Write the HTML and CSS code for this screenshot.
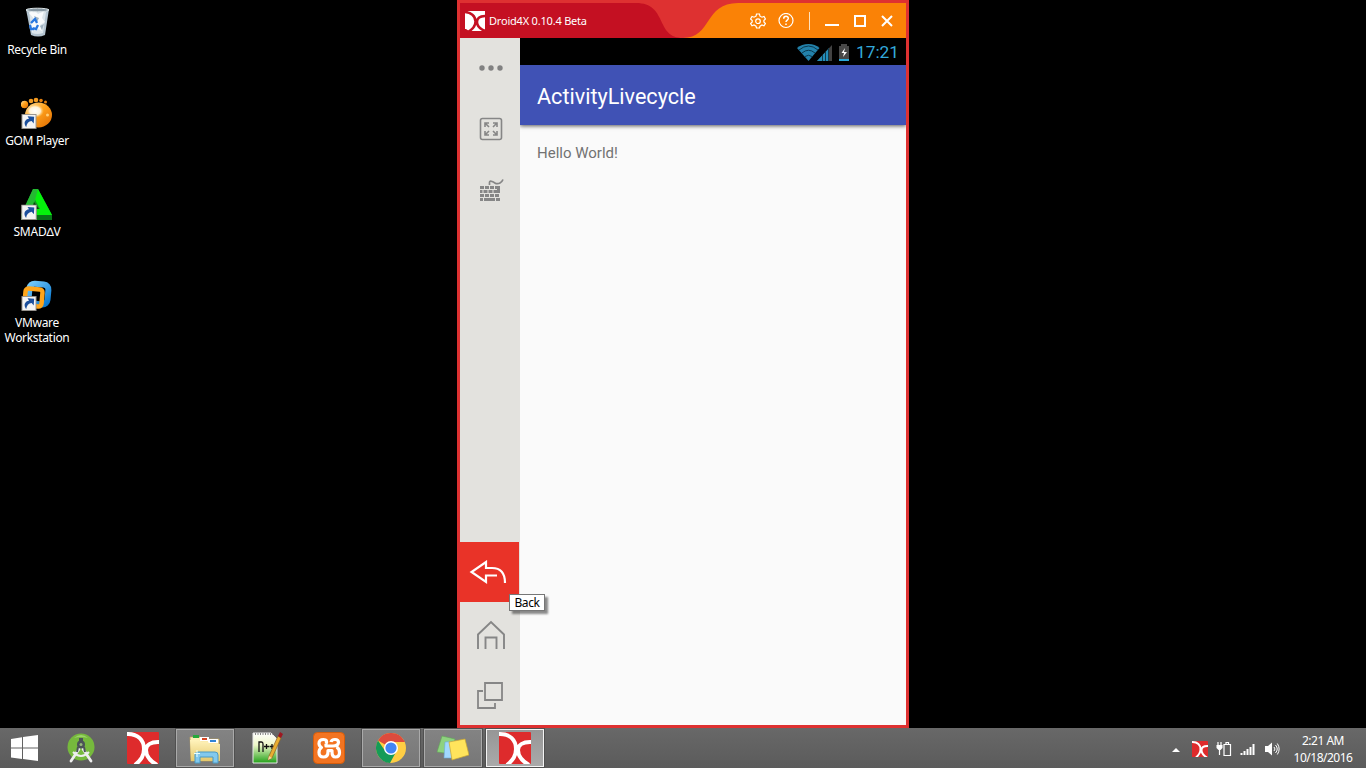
FILE: index.html
```html
<!DOCTYPE html>
<html lang="en">
<head>
<meta charset="utf-8">
<title>Desktop</title>
<link rel="stylesheet" href="styles.css">
</head>
<body>
<svg class="defs" width="0" height="0">
  <defs>
    <linearGradient id="gold" x1="0" y1="0" x2="1" y2="1"><stop offset="0" stop-color="#ffe0a0"/><stop offset=".45" stop-color="#ffa21c"/><stop offset="1" stop-color="#e06a00"/></linearGradient>
    <radialGradient id="shine"><stop offset="0" stop-color="#fff"/><stop offset=".6" stop-color="#fff2d8"/><stop offset="1" stop-color="#ffc058" stop-opacity="0"/></radialGradient>
    <linearGradient id="blue" x1="0" y1="0" x2="1" y2="1"><stop offset="0" stop-color="#72c8fa"/><stop offset="1" stop-color="#0878d0"/></linearGradient>
    <linearGradient id="folder" x1="0" y1="0" x2="0" y2="1"><stop offset="0" stop-color="#fff3bc"/><stop offset="1" stop-color="#e5c86b"/></linearGradient>
    <linearGradient id="page" x1="0" y1="0" x2="0" y2="1"><stop offset="0" stop-color="#fff"/><stop offset=".4" stop-color="#eef8c8"/><stop offset="1" stop-color="#22a018"/></linearGradient>
    <symbol id="shortcut" viewBox="0 0 16 16"><rect x=".5" y=".5" width="15" height="15" fill="#f4f4f4" stroke="#96928c"/><path d="M5 14C1.500 9 4 5.500 8 5L6.500 2.500L13.500 3L13 10L10.800 7.500C7.500 8 5.500 10 5 14Z" fill="#1c4f9c"/></symbol>
    <symbol id="droid" viewBox="0 0 32 32"><rect width="32" height="32" rx="1" fill="#de2b2c"/><path d="M-1 2H1C11 2 17 8 17 17C17 24 14 28 8 33M33 10H31C24 10 19 13 19 18C19 25 23 29 30 33" fill="none" stroke="#fff" stroke-width="4"/></symbol>
  </defs>
</svg>
<main class="desktop">
  <div class="shortcuts">
    <div class="item"><svg width="32" height="32" viewBox="0 0 32 32"><path d="M5 3L28 3L24 29Q17 32 10 29Z" fill="#b4c4d0"/><path d="M8 6L25 6L22 27Q16 29 11 27Z" fill="#dce5eb"/><path d="M8 7L13 4L17 8L23 5L21 12L24 16L19 19L21 25L15 22L11 26L10 18L14 14Z" fill="#f9fbfc"/><path d="M13 10L18 12L16 16ZM19 20L23 18L21 24Z" fill="#9fb2c0"/><ellipse cx="16.500" cy="4" rx="11.500" ry="1.800" fill="#8797a2" stroke="#dce5e8"/><path d="M10 17L14 13L16 17M17 19L15 23L12 22M9 19L10 23L13 23" fill="none" stroke="#2878e0" stroke-width="2.300"/></svg><span>Recycle Bin</span></div>
    <div class="item"><svg width="32" height="32" viewBox="1 -1 32 32"><circle cx="4.500" cy="6.500" r="3.700" fill="url(#gold)"/><circle cx="11" cy="3" r="2.300" fill="#f39a20"/><circle cx="16" cy="2" r="2.300" fill="#f39a20"/><circle cx="21" cy="2.500" r="1.800" fill="#e58110"/><circle cx="25.500" cy="4" r="1.500" fill="#e58110"/><ellipse cx="18.500" cy="17" rx="13.500" ry="12.500" fill="url(#gold)"/><ellipse cx="15" cy="13" rx="9" ry="7" fill="url(#shine)"/><circle cx="27.500" cy="17" r="1.500" fill="#ffcf76"/><use href="#shortcut" x="1" y="16" width="16" height="15"/></svg><span>GOM Player</span></div>
    <div class="item"><svg width="32" height="32" viewBox="1 0 32 32"><path d="M13 1H18L32 27L28 32H1V27Z" fill="#159323"/><path d="M18 1L32 27H11L15 21H20L13 8Z" fill="#05f20c"/><path d="M13 1L18 1L11 27H1Z" fill="#24b932"/><path d="M14 14L19 21H12Z" fill="#08400c"/><path d="M9 27H32V32H9Z" fill="#087319"/><use href="#shortcut" x="1" y="16.500" width="16" height="15.500"/></svg><span class="wide">SMAD∆V</span></div>
    <div class="item"><svg width="32" height="32" viewBox="1 -1 32 32"><rect x="9" y="4" width="19" height="20" rx="5" fill="none" stroke="url(#blue)" stroke-width="6" transform="rotate(5 18 14)"/><rect x="5" y="9" width="17" height="17" rx="3" fill="none" stroke="#ffa51a" stroke-width="4.500" transform="rotate(5 14 18)"/><use href="#shortcut" x="1" y="16" width="16" height="15"/></svg><span>VMware<br>Workstation</span></div>
  </div>

  <section class="window">
    <header class="titlebar">
      <svg class="curves" width="446" height="35" viewBox="0 0 446 35"><path d="M0 0H176C208 0 195 35 223 35H0Z" fill="#c41022"/><path d="M223 35C252 35 244 0 278 0H446V35Z" fill="#fa8206"/></svg>
      <div class="brand"><svg width="20" height="20" viewBox="0 0 20 20"><path d="M0 0H20V20H0Z" fill="#fff"/><path d="M0 0H3L1 2H0ZM0 18H1L4 20H0ZM18 20L20 18V20Z" fill="#c41022"/><path d="M-1 1C6 1 10.500 5 10.500 10.500C10.500 15 8 18 3 21M21 5C15 5 12 7.500 12 11C12 15 15 18 20 20" fill="none" stroke="#c41022" stroke-width="2.500"/></svg><span>Droid4X 0.10.4 Beta</span></div>
      <div class="controls">
        <svg width="16" height="16" viewBox="0 0 16 16"><path d="M6.500 1H9.500L10 3.200L12 4.200L14 3.500L15.400 6L13.900 7.500V9L15.400 10.500L14 12.800L12 12L10 13.100L9.500 15H6.500L6 13.100L4 12L2 12.800L.6 10.500L2.200 9V7.500L.6 6L2 3.500L4 4.200L6 3.200Z"/><circle cx="8" cy="8.200" r="2.300"/></svg>
        <svg width="16" height="16" viewBox="0 0 16 16"><circle cx="8" cy="7.500" r="7"/><path d="M5.700 5.700C5.700 2.500 10.500 2.700 10.300 5.500C10.200 7.100 8 7.200 8 9.100M8 10.500V12" stroke-width="1.500"/></svg>
        <i class="divider"></i>
        <svg width="14" height="14" viewBox="0 0 14 14"><path d="M0 11H14" stroke-width="2"/></svg>
        <svg width="14" height="14" viewBox="0 0 14 14"><rect x="2" y="2" width="10" height="10" stroke-width="2"/></svg>
        <svg width="14" height="14" viewBox="0 0 14 14"><path d="M2 2L12 12M12 2L2 12" stroke-width="2"/></svg>
      </div>
    </header>
    <div class="content">
      <aside class="tools">
        <div class="tool"><svg width="26" height="8" viewBox="0 0 26 8" class="solid"><circle cx="4" cy="4" r="2.700"/><circle cx="13" cy="4" r="2.700"/><circle cx="22" cy="4" r="2.700"/></svg></div>
        <div class="tool"><svg width="24" height="24" viewBox="0 0 24 24"><rect x="1.500" y="1.500" width="21" height="21" rx="2" stroke-width="1.600"/><path d="M6 10V6H10M6 6L10 10M14 6H18V10M18 6L14 10M6 14V18H10M6 18L10 14M18 14V18H14M18 18L14 14" stroke-width="1.600"/></svg></div>
        <div class="tool"><svg width="26" height="24" viewBox="0 0 26 24"><path d="M11.500 7V4.500Q11.500 2.500 14 3.500C18 5 18 7 22 5Q24 4 25 1.500" stroke-width="1.700"/><path d="M2 9.500H22M2 17.500H22" stroke-width="3" stroke-dasharray="4 1"/><path d="M2 13.500H22" stroke-width="3" stroke-dasharray="2.500 1 4 1 4 1 4 1"/><path d="M2 21.500H5M6 21.500H17M18 21.500H22M20.500 8V15" stroke-width="3"/></svg></div>
        <div class="tool back"><svg width="38" height="26" viewBox="0 0 38 26"><path d="M28 15.500H17V22L2.500 12L17 2V8H23C32 8 36 14 36 23" stroke-width="2.200"/></svg></div>
        <div class="tool home"><svg width="30" height="30" viewBox="0 0 30 30"><path d="M2 29V14.500L15 2L28 14.500V29M9.500 29V17.500H20.500V29" stroke-width="1.900"/></svg></div>
        <div class="tool recent"><svg width="28" height="28" viewBox="0 0 28 28"><path d="M9 2H26V19H9ZM7 10H2V27H19V22" stroke-width="1.800"/></svg></div>
      </aside>
      <article class="phone">
        <div class="status">
          <svg width="60" height="22" viewBox="0 0 60 22"><path d="M11.500 20L0 7C6 1.500 17 1.500 22.500 7Z" fill="#2382ab"/><path d="M2 9Q11.500 1 21 9M5 12Q11.500 6.500 18 12M8 15.500Q11.500 13 15 15.500" fill="none" stroke="#0a394f" stroke-width="1"/><path d="M20 20L35 4V20Z" fill="#424242"/><path d="M20 20L31 8.200V20Z" fill="#238db9"/><path d="M25.500 14V20M28.500 11V20M31.500 7V20" stroke="#123c4c"/><path d="M42 5H44V3H50V5H52V20H42Z" fill="#484848"/><path d="M42 18H52V20H42Z" fill="#2aa8d8"/><path d="M48 7L44.500 12H47L46 16L50 11H47Z" fill="#fff"/></svg>
          <time>17:21</time>
        </div>
        <header class="appbar"><h1>ActivityLivecycle</h1></header>
        <p class="hello">Hello World!</p>
      </article>
    </div>
    <div class="tooltip"><span>Back</span></div>
  </section>
</main>

<footer class="taskbar">
  <div class="start"><svg width="27" height="27" viewBox="0 0 27 27"><path d="M0 4L11 2.200V12.500H0ZM12 2L27 0V12.500H12ZM0 13.500H11V24L0 22.500ZM12 13.500H27V26L12 24Z" fill="#fff"/></svg></div>
  <nav class="apps">
    <div class="app"><svg width="32" height="32" viewBox="0 0 32 32"><circle cx="16" cy="15" r="13.500" fill="#76b93d"/><path d="M9 6Q16 0 23 6Q15 4 9 6" fill="#9bd26a"/><path d="M14 17L6 29M18 17L26 29" stroke="#eee" stroke-width="2.800" stroke-linecap="round"/><path d="M8 20Q16 28 24 20" fill="none" stroke="#eee" stroke-width="2"/><path d="M14 6H18V9H14Z" fill="#4b5357"/><circle cx="16" cy="12.500" r="4" fill="#4b5357"/><path d="M13 15L12 20M19 15L20 20" stroke="#4b5357" stroke-width="2"/><circle cx="16" cy="12.500" r="1.500" fill="#96b77c"/></svg></div>
    <div class="app"><svg width="32" height="32"><use href="#droid"/></svg></div>
    <div class="app open"><svg width="34" height="32" viewBox="0 0 34 32"><path d="M2 5H13L15 7H31V29H3Z" fill="url(#folder)" stroke="#bca15a" stroke-width=".7"/><path d="M5 3H11V6H5Z" fill="#25a83a"/><path d="M12 5H21V9H12Z" fill="#fff"/><path d="M14 6H19V8H14Z" fill="#d44524"/><path d="M20 7H30V11H20Z" fill="#fff"/><path d="M22 8H28V10H22Z" fill="#3184d6"/><path d="M2 8H11L13 10H20L22 12H32V29H3Z" fill="url(#folder)"/><path d="M7 31V23Q7 20 10 20H27Q30 20 30 23V31H25V25H12V31Z" fill="#83c9ed" stroke="#4a9ac4"/><path d="M9 18V25M6 21.500H12" stroke="#e8ffff"/></svg></div>
    <div class="app"><svg width="32" height="34" viewBox="0 0 32 34"><path d="M2 2H20L26 8V32H2Z" fill="url(#page)" stroke="#e8e8e8"/><path d="M4 3H22" stroke="#888" stroke-dasharray="1 1.500" stroke-width="2"/><path d="M8 21V11H10.500Q12 11 12 13V21M13 15.500H18M15.500 13V18M18.500 15.500H23.500M21 13V18" fill="none" stroke="#111" stroke-width="1.300"/><path d="M18 25L27 5L30 7L21 27L17 29Z" fill="#e9ad31" stroke="#886225" stroke-width=".7"/><path d="M27 5L29 1L32 3L30 7Z" fill="#9e1720"/><path d="M17 29L18 25L21 27Z" fill="#f7d5a0"/></svg></div>
    <div class="app"><svg width="32" height="32" viewBox="0 0 32 32"><rect x=".5" y=".5" width="31" height="31" rx="4" fill="#f37421" stroke="#d65d0b"/><path d="M13 12V14H20Q25 14 25.500 10.500Q25.500 7.500 22 7.500Q18.500 7.500 18 10M13 12Q15 7.500 10.500 7.500Q6 7.500 6 11.500Q6 14 8.500 15.500Q6 17 6 20.500Q6 25 10.500 25Q15 25 15 20V18.500H19V20Q19 25 22.500 25Q26.500 25 26.500 20.500Q26.500 16.500 23.500 15" fill="none" stroke="#fff" stroke-width="3.200" stroke-linejoin="round"/></svg></div>
    <div class="app open"><svg width="30" height="30" viewBox="0 0 30 30"><circle cx="15" cy="15" r="15" fill="#ffce44"/><path d="M15 15L2 7.500A15 15 0 0 1 28 7.500L29 9H15Z" fill="#dd4b3d"/><path d="M2 7.500A15 15 0 0 0 14 30L20 19L15 15L8.500 17Z" fill="#159b57"/><circle cx="15" cy="15" r="7" fill="#fff"/><circle cx="15" cy="15" r="5.600" fill="#4285f4"/></svg></div>
    <div class="app open"><svg width="32" height="28" viewBox="0 0 32 28"><path d="M5 2L18 5L15 20L0 18Z" fill="#8ed27f" stroke="#61a755" stroke-width=".6"/><path d="M8 8L21 7L22 24L7 24Z" fill="#a1d8ff" stroke="#6caad5" stroke-width=".6"/><path d="M12 8L28 5L32 21L15 26Z" fill="#ffe45c" stroke="#c8a530" stroke-width=".7"/></svg></div>
    <div class="app open active"><svg width="32" height="32"><use href="#droid"/></svg></div>
  </nav>
  <div class="tray">
    <svg width="8" height="5" viewBox="0 0 8 5"><path d="M0 5L4 1L8 5Z" fill="#fff"/></svg>
    <svg width="16" height="16"><use href="#droid"/></svg>
    <svg width="16" height="16" viewBox="0 0 16 16"><path d="M2 1V4M5 1V4M3.500 8V14" stroke="#fff" stroke-width="1.200"/><path d="M.5 4H6.500V7L4.500 9H2.500L.5 7Z" fill="#fff"/><path d="M8 3.500H14.500V14.500H8ZM10 3V1.500H12.500V3" fill="none" stroke="#fff" stroke-width="1.200"/></svg>
    <svg width="16" height="16" viewBox="0 0 16 16"><path d="M1.500 12V14M4.500 10V14M7.500 8V14M10.500 6V14M13.500 3V14" stroke="#fff" stroke-width="2"/></svg>
    <svg width="16" height="16" viewBox="0 0 16 16"><path d="M1 5H4L8 1.500V14.500L4 11H1Z" fill="#fff"/><path d="M10 6Q12 8 10 10M11.500 4Q15 8 11.500 12M13.300 2.500Q17 8 13.300 13.500" fill="none" stroke="#fff"/></svg>
    <div class="clock"><span>2:21 AM</span><span>10/18/2016</span></div>
  </div>
</footer>
</body>
</html>
```
FILE: styles.css
```css
* { box-sizing: border-box; }
body { margin: 0; width: 1366px; height: 768px; overflow: hidden; background: #000; display: flex; flex-direction: column; font-family: "Noto Sans", sans-serif; }
svg { display: block; flex: none; }
.defs { position: absolute; }
.desktop { height: 728px; display: flex; }
.shortcuts { width: 457px; padding: 6px 0 0; display: grid; grid-template-columns: 74px; grid-auto-rows: 91px; align-content: start; }
.item { display: flex; flex-direction: column; align-items: center; color: #fff; font-size: 12px; line-height: 15px; text-align: center; gap: 4px; letter-spacing: -.33px; white-space: nowrap; }
.item .wide { letter-spacing: -.2px; }
.window { position: relative; width: 452px; height: 728px; border: 3px solid #de3131; display: flex; flex-direction: column; }
.titlebar { position: relative; height: 35px; background: #de3131; display: flex; justify-content: space-between; flex: none; }
.curves { position: absolute; inset: 0; }
.brand { position: relative; display: flex; align-items: center; padding-left: 5px; gap: 4px; color: #fff; font: 11px/16px "Noto Sans", sans-serif; letter-spacing: -.2px; white-space: nowrap; }
.controls { position: relative; display: flex; align-items: center; padding-right: 12px; }
.controls svg { fill: none; stroke: #fff; stroke-width: 1.2; }
.controls svg + svg { margin-left: 12px; }
.controls .divider + svg { margin-left: 15px; }
.controls .divider + svg ~ svg { margin-left: 14px; }
.controls .divider + svg ~ svg:last-child { margin-left: 13px; }
.divider { width: 1px; height: 18px; background: #ffe1bd; margin-left: 15px; }
.content { display: flex; flex: 1; min-height: 0; }
.tools { width: 60px; background: #e3e2de; display: flex; flex-direction: column; }
.tool { height: 61px; padding-left: 1px; display: flex; align-items: center; justify-content: center; flex: none; }
.tool:first-child { height: 60px; }
.tool svg { fill: none; stroke: #868686; }
.tool .solid { fill: #818181; stroke: none; }
.tool.back { height: 60px; width: 59px; padding: 2px 3px 0 0; background: #e93328; margin-top: auto; }
.tool.back svg { stroke: #fff; }
.tool.home { height: 62px; padding-top: 3px; }
.tool.recent { padding-left: 0; }
.phone { flex: 1; background: #fafafa; font-family: Roboto, sans-serif; overflow: hidden; }
.status { height: 27px; background: #000; color: #33a9dc; display: flex; align-items: center; justify-content: flex-end; gap: 0; padding-right: 7px; font-size: 17.3px; }
.status svg { margin-right: -1px; }
.appbar { height: 60px; background: #4052b5; padding: 0 17px; display: flex; align-items: center; box-shadow: 0 1px 4px rgba(0,0,0,.65); clip-path: inset(0 0 -8px); }
.appbar h1 { margin: 0; padding-top: 2px; color: #fff; font-size: 21.600px; font-weight: 400; white-space: nowrap; }
.hello { margin: 18px 17px; color: #727272; font-size: 15px; line-height: 20px; }
.tooltip { position: absolute; left: 49px; top: 591px; width: 36px; height: 17px; border: 1px solid #767676; background: #fff; color: #000; font-size: 12px; line-height: 15px; text-align: center; letter-spacing: -.4px; box-shadow: 3px 3px 2px rgba(0,0,0,.45); }
.taskbar { height: 40px; display: flex; background: linear-gradient(#686868, #5b5b5b); }
.start { width: 50px; padding-right: 1px; display: flex; align-items: center; justify-content: center; }
.apps { display: flex; gap: 4px; padding-left: 2px; }
.app { width: 58px; height: 40px; display: flex; align-items: center; justify-content: center; }
.app.open { height: 38px; margin-top: 1px; border: 1px solid #aaa; background: linear-gradient(#838383, #777); box-shadow: 0 0 0 1px #505050; }
.app.active { border-color: #f4f4f4; background: linear-gradient(#969696, #aaa); }
.tray { margin-left: auto; display: flex; align-items: center; gap: 8px; padding-right: 13px; }
.tray svg { margin-top: 2px; }
.tray svg:first-child { margin-right: 4px; }
.clock { width: 60px; display: flex; flex-direction: column; align-items: center; color: #fff; font-size: 12px; line-height: 17px; letter-spacing: -.5px; white-space: nowrap; margin-left: 5px; padding-top: 1px; }
```
